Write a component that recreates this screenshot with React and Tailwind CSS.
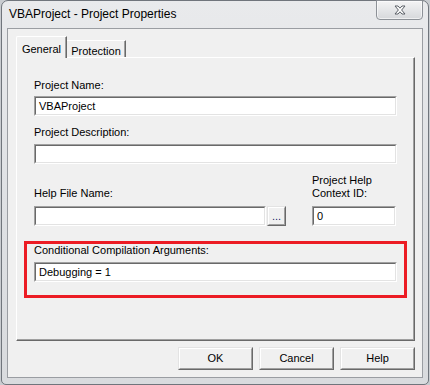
import React from "react";

const Field = ({ className, value }) => (
  <div
    className={`h-[20px] border border-t-[#a0a0a0] border-l-[#a0a0a0] border-r-white border-b-white ${className}`}
  >
    <div className="h-full border border-t-[#696969] border-l-[#696969] border-r-[#e3e3e3] border-b-[#e3e3e3] bg-white pl-[3px] flex items-center text-[11px] leading-none">
      {value}
    </div>
  </div>
);

const RaisedButton = ({ className, children }) => (
  <div
    className={`border border-t-[#e3e3e3] border-l-[#e3e3e3] border-r-[#696969] border-b-[#696969] ${className}`}
  >
    <div className="h-full border border-t-white border-l-white border-r-[#a0a0a0] border-b-[#a0a0a0] bg-[#f0f0f0] flex items-center justify-center text-[11px]">
      {children}
    </div>
  </div>
);

const CloseGlyph = () => (
  <svg width="12" height="10" viewBox="0 0 12 10">
    <path
      d="M1 1h3l2 2.2L8 1h3L7.6 5 11 9H8L6 6.8 4 9H1l3.4-4z"
      fill="#ffffff"
      stroke="#5a5f66"
      strokeWidth="1"
      strokeLinejoin="round"
    />
  </svg>
);

export default function App() {
  return (
    <div className="w-[430px] h-[385px] bg-[#c9ccd0] font-['Liberation_Sans',Arial,sans-serif] text-black overflow-hidden">
      <div className="ml-[1px] w-[428px] h-[385px] rounded-t-[7px] rounded-b-[5px] border border-[#70757c] bg-gradient-to-b from-[#e9eaec] via-[#dfe1e4] to-[#d9dbde] flex flex-col">
        {/* title bar */}
        <div className="h-[27px] flex justify-between">
          <div className="pl-[7px] pt-[6px] text-[12px] leading-[15px] text-black">
            VBAProject - Project Properties
          </div>
          <div className="mr-[5px] -mt-px w-[47px] h-[20px] rounded-b-[4px] border border-[#8d9197] bg-gradient-to-b from-[#f4f4f5] to-[#d6d8db] shadow-[inset_0_0_0_1px_rgba(255,255,255,0.6)] flex items-center justify-center">
            <CloseGlyph />
          </div>
        </div>

        {/* client area */}
        <div className="ml-[5px] w-[416px] h-[350px] border border-[#9a9da2] bg-[#f0f0f0] pl-[8px] pr-[7px] pt-[7px] flex flex-col">
          {/* tabs */}
          <div className="h-[21px] flex items-end text-[11px]">
            <div className="relative z-10 -mb-px h-[22px] w-[51px] border-t border-l border-r border-t-white border-l-white border-r-[#696969] shadow-[inset_-1px_0_0_#a0a0a0] bg-[#f0f0f0] flex items-start justify-center pt-[4px] rounded-tl-[2px]">
              General
            </div>
            <div className="h-[17px] w-[59px] border-t border-r border-t-white border-r-[#696969] shadow-[inset_-1px_0_0_#a0a0a0] flex items-start justify-center pt-[2px]">
              Protection
            </div>
          </div>

          {/* tab page */}
          <div className="h-[284px] w-[399px] border border-t-white border-l-white border-r-[#696969] border-b-[#696969] shadow-[inset_-1px_-1px_0_#a0a0a0] pl-[17px] pr-[17px] pt-[21px] text-[11px] leading-[13px] flex flex-col">
            <div>Project Name:</div>
            <Field className="mt-[4px]" value="VBAProject" />

            <div className="mt-[10px]">Project Description:</div>
            <Field className="mt-[5px]" value="" />

            <div className="mt-[10px] flex items-end">
              <div className="flex flex-col">
                <div>Help File Name:</div>
                <div className="mt-[6px] flex">
                  <Field className="w-[232px]" value="" />
                  <RaisedButton className="ml-[1px] w-[19px] h-[20px]">
                    <span className="text-[#1a1a6e] leading-none">...</span>
                  </RaisedButton>
                </div>
              </div>
              <div className="ml-[26px] flex flex-col">
                <div>Project Help</div>
                <div>Context ID:</div>
                <Field className="mt-[6px] w-[84px]" value="0" />
              </div>
            </div>

            <div className="mt-[15px] -mx-[10px] border-[3px] border-[#ec1c24] px-[7px] pb-[13px]">
              <div>Conditional Compilation Arguments:</div>
              <Field className="mt-[5px]" value="Debugging = 1" />
            </div>
          </div>

          {/* buttons */}
          <div className="mt-[6px] w-[399px] flex justify-end gap-[6px] text-[11px]">
            <RaisedButton className="w-[75px] h-[23px]">OK</RaisedButton>
            <RaisedButton className="w-[75px] h-[23px]">Cancel</RaisedButton>
            <RaisedButton className="w-[75px] h-[23px]">Help</RaisedButton>
          </div>
        </div>
      </div>
    </div>
  );
}
